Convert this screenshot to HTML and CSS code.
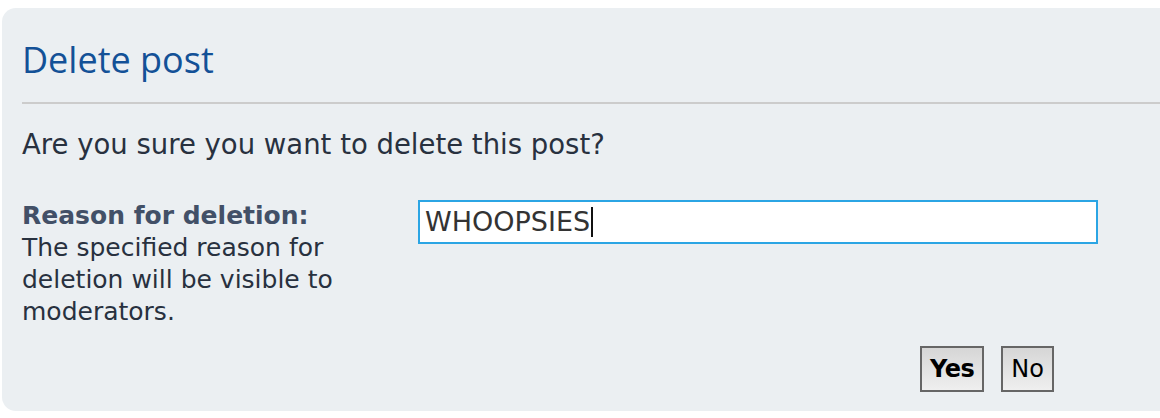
FILE: index.html
```html
<!DOCTYPE html>
<html lang="en">
<head>
<meta charset="utf-8">
<title>Delete post</title>
<link rel="stylesheet" href="styles.css">
</head>
<body>
<form class="panel">
  <h2 class="title">Delete post</h2>
  <p class="question">Are you sure you want to delete this post?</p>
  <div class="field">
    <div class="field-label">
      <label class="label-title">Reason for deletion:</label>
      <span class="label-desc">The specified reason for deletion will be visible to moderators.</span>
    </div>
    <div class="field-input">
      <div class="textbox">WHOOPSIES<span class="caret"></span></div>
    </div>
  </div>
  <div class="buttons">
    <button type="button" class="btn btn-primary">Yes</button>
    <button type="button" class="btn">No</button>
  </div>
</form>
</body>
</html>
```

FILE: styles.css
```css
html, body {
  margin: 0;
  padding: 0;
  overflow: hidden;
  background: #ffffff;
}

body {
  font-family: "DejaVu Sans", Verdana, sans-serif;
  color: #28313f;
}

.panel {
  margin: 8px 0 0 2px;
  box-sizing: border-box;
  height: 403px;
  padding: 30px 0 0 20px;
  background: #ebeff2;
  border-radius: 14px 0 0 14px;
}

.title {
  margin: 0;
  font-family: "Open Sans", "Liberation Sans", sans-serif;
  font-weight: 400;
  font-size: 36px;
  line-height: 44px;
  color: #135197;
  padding-bottom: 20px;
  border-bottom: 2px solid #cccccc;
}

.question {
  margin: 24px 0 0 0;
  font-size: 27.5px;
  line-height: 32px;
  color: #28313f;
}

.field {
  display: flex;
  margin-top: 40px;
}

.field-label {
  width: 396px;
  flex: none;
  font-size: 25px;
  line-height: 32px;
}

.label-title {
  display: block;
  font-weight: 700;
  color: #425067;
}

.label-desc {
  display: block;
  width: 345px;
  color: #28313f;
}

.textbox {
  width: 680px;
  height: 44px;
  box-sizing: border-box;
  border: 2px solid #2ba5e4;
  background: #ffffff;
  padding: 0 5px;
  font-size: 27px;
  line-height: 40px;
  color: #333333;
  white-space: nowrap;
}

.caret {
  display: inline-block;
  width: 2px;
  height: 30px;
  margin-left: 1px;
  vertical-align: -6px;
  background: #111111;
}

.buttons {
  display: flex;
  justify-content: flex-end;
  gap: 17px;
  margin: 18px 106px 0 0;
}

.btn {
  height: 46px;
  box-sizing: border-box;
  border: 2px solid #666666;
  border-radius: 0;
  padding: 0 8px;
  background: linear-gradient(to bottom, #d6d6d6, #efefef);
  font-family: "DejaVu Sans", sans-serif;
  font-size: 24px;
  color: #000000;
  line-height: 40px;
}

.btn-primary {
  font-weight: 700;
  letter-spacing: -0.5px;
}
```
